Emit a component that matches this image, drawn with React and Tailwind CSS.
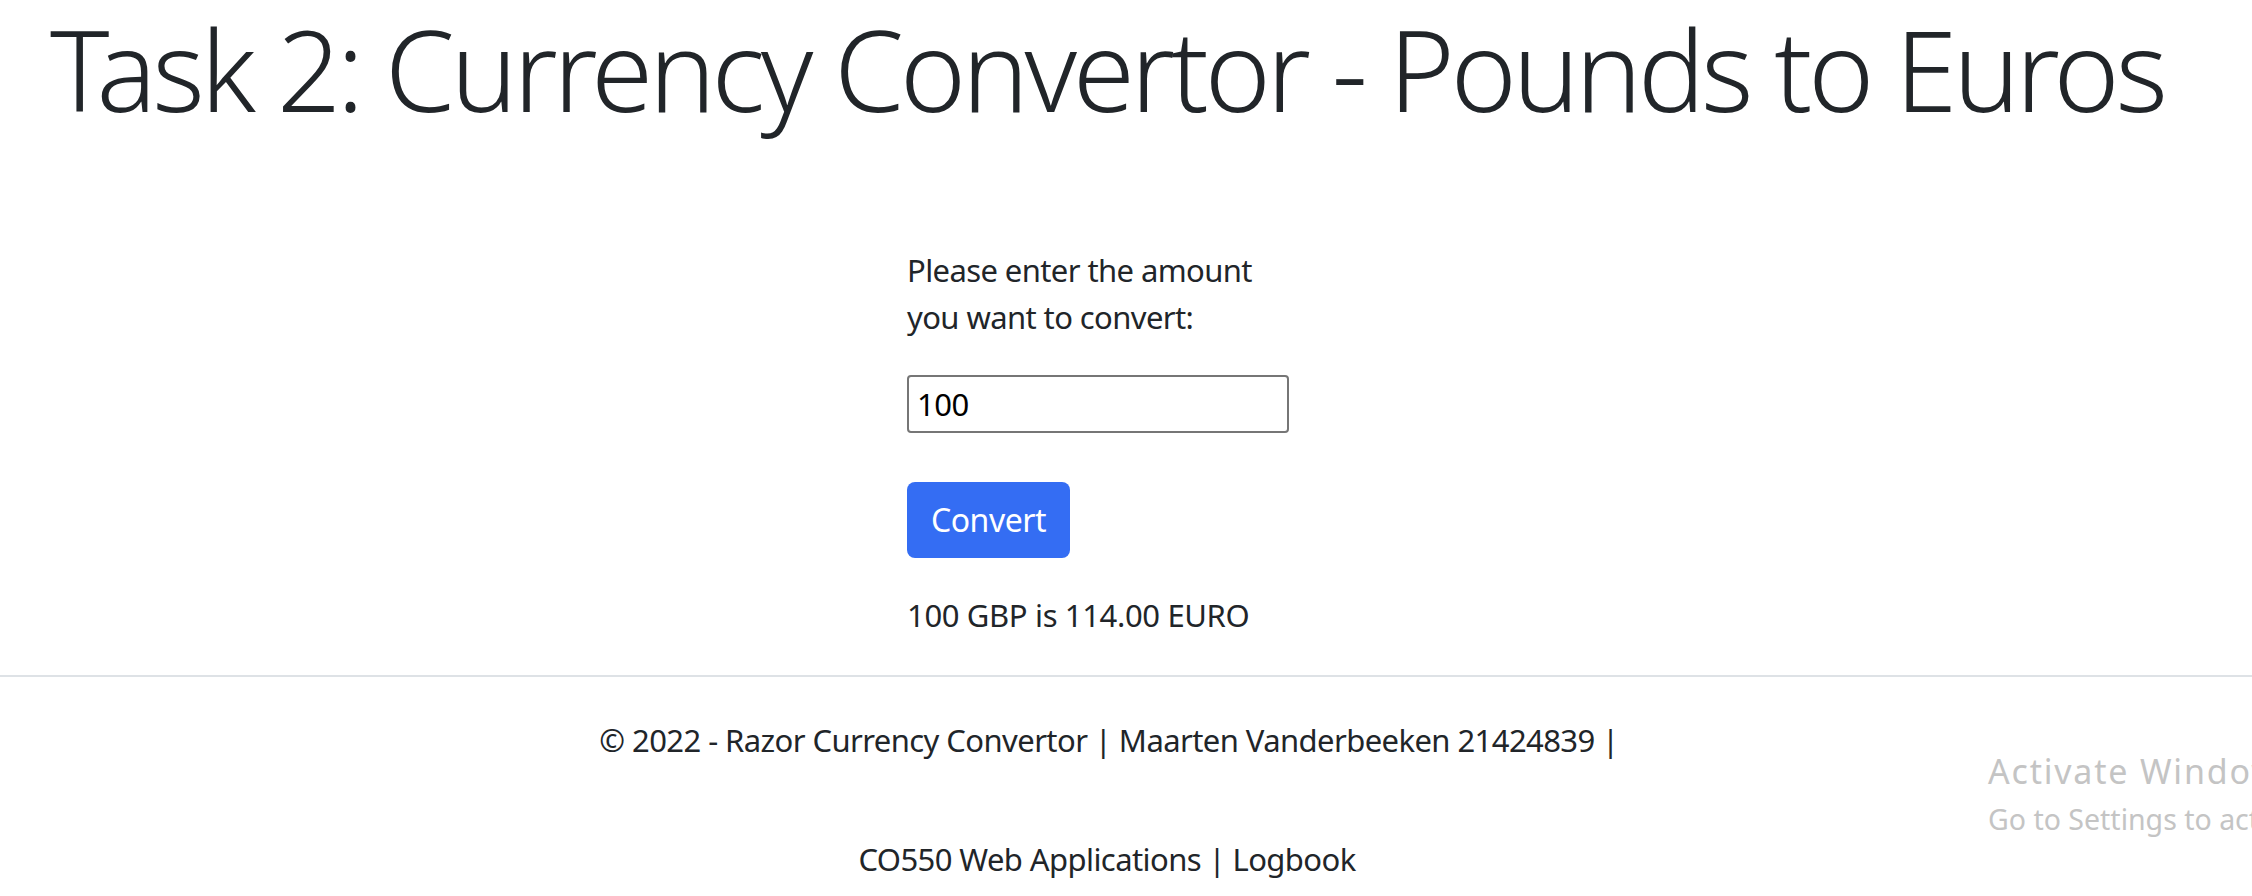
export default function App() {
  return (
    <div
      className="relative w-[2252px] h-[896px] overflow-hidden bg-white text-[#212529]"
      style={{ fontFamily: '"Noto Sans", "Open Sans", sans-serif' }}
    >
      {/* Page heading */}
      <h1 className="-mt-[8px] pl-[50px] text-[112px] leading-[153px] font-light tracking-[-4.1px] whitespace-nowrap">
        Task 2: Currency Convertor - Pounds to Euros
      </h1>

      {/* Converter form */}
      <div className="ml-[907px] mt-[102px] flex flex-col items-start">
        <p className="text-[31px] leading-[47px] tracking-[-0.6px]">
          Please enter the amount
          <br />
          you want to convert:
        </p>
        <input
          type="text"
          defaultValue="100"
          className="mt-[34px] w-[382px] h-[58px] border-2 border-[#767676] rounded-[4px] px-[8px] text-[31px] tracking-[-0.5px] text-black outline-none"
        />
        <button className="mt-[49px] w-[163px] h-[76px] rounded-[8px] bg-[#346df3] text-white text-[32px] tracking-[-0.5px] flex items-center justify-center">
          Convert
        </button>
        <p className="mt-[34px] text-[31px] leading-[47px] tracking-[-0.35px]">100 GBP is 114.00 EURO</p>
      </div>

      {/* Footer */}
      <footer className="mt-[36px] border-t-2 border-[#dee2e6] text-[31px] leading-[47px] tracking-[-0.58px]">
        <p className="mt-[40px] text-center pr-[34px]">
          © 2022 - Razor Currency Convertor | Maarten Vanderbeeken 21424839 |
        </p>
        <p className="mt-[72px] text-center pr-[38px]">CO550 Web Applications | Logbook</p>
      </footer>

      {/* Windows watermark overlay */}
      <div className="absolute left-[1988px] top-[748px] whitespace-nowrap text-[#c4c4c4]">
        <div className="text-[34px] leading-[46px] tracking-[1.8px]">Activate Windows</div>
        <div className="text-[28.5px] leading-[40px] mt-[5px]">Go to Settings to activate Windows.</div>
      </div>
    </div>
  )
}
